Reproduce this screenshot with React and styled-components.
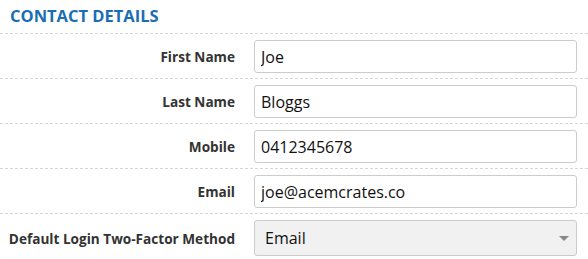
import React from "react";
import styled, { createGlobalStyle } from "styled-components";

const Global = createGlobalStyle`
  html, body { margin: 0; padding: 0; background: #fff; }
  body { font-family: "Open Sans", "Segoe UI", sans-serif; color: #333; }
  * { box-sizing: border-box; }
`;

const Panel = styled.section`
  width: 588px;
  padding: 0;
`;

const Title = styled.h2`
  margin: 0;
  padding: 5px 10px 7px;
  font-size: 16.5px;
  line-height: 21px;
  font-weight: 700;
  color: #1a6eb4;
  text-transform: uppercase;
  border-bottom: 1px dashed #d6d6d6;
`;

const Row = styled.div`
  display: grid;
  grid-template-columns: 235px 1fr;
  column-gap: 19px;
  align-items: center;
  padding: 6px 11px 5px 0;
  border-bottom: ${(p) => (p.$last ? "none" : "1px dashed #d6d6d6")};
`;

const Label = styled.label`
  text-align: right;
  font-size: 13.6px;
  font-weight: 700;
  color: #333;
`;

const Input = styled.input`
  width: 100%;
  height: 33px;
  border: 1px solid #ccc;
  border-radius: 3px;
  padding: 0 6px;
  font-family: "Open Sans", "Segoe UI", sans-serif;
  font-size: 16px;
  color: #111;
  background: #fff;
  outline: none;
`;

const SelectBox = styled.div`
  position: relative;
  height: 36px;
  border: 1px solid #ccc;
  border-radius: 3px;
  background: #f1f1f1;
  display: flex;
  align-items: center;
  padding: 0 10px;
  font-size: 16px;
  color: #111;
`;

const Caret = styled.span`
  position: absolute;
  right: 7px;
  top: 50%;
  margin-top: -2px;
  width: 0;
  height: 0;
  border-left: 5px solid transparent;
  border-right: 5px solid transparent;
  border-top: 5px solid #888;
`;

const fields = [
  { label: "First Name", value: "Joe" },
  { label: "Last Name", value: "Bloggs" },
  { label: "Mobile", value: "0412345678" },
  { label: "Email", value: "joe@acemcrates.co" },
];

export default function App() {
  return (
    <>
      <Global />
      <Panel>
        <Title>Contact Details</Title>
        {fields.map((f) => (
          <Row key={f.label}>
            <Label>{f.label}</Label>
            <Input defaultValue={f.value} />
          </Row>
        ))}
        <Row $last>
          <Label>Default Login Two-Factor Method</Label>
          <SelectBox>
            Email
            <Caret />
          </SelectBox>
        </Row>
      </Panel>
    </>
  );
}
